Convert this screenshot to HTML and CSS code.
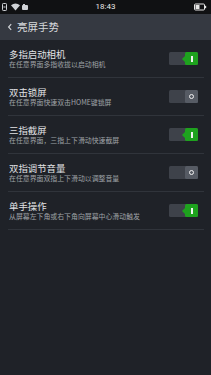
FILE: index.html
```html
<!DOCTYPE html>
<html lang="zh">
<head>
<meta charset="utf-8">
<link rel="stylesheet" href="styles.css">
</head>
<body>
<div class="screen">
  <div class="status">
    <div class="st-left">
      <svg width="30" height="10" viewBox="0 0 30 10">
        <rect x="2.5" y="1.5" width="4" height="7" rx="0.8" fill="none" stroke="#cfd2d6" stroke-width="1"/>
        <rect x="3.5" y="4.5" width="2" height="1" fill="#cfd2d6"/>
        <path d="M11 3.2 Q15.5 -0.2 20 3.2 L15.5 8.5 Z" fill="#cfd2d6"/>
        <rect x="22" y="3" width="6" height="5" rx="1" fill="#cfd2d6"/>
        <rect x="23" y="2" width="2" height="1.2" fill="#cfd2d6"/>
      </svg>
    </div>
    <div class="time">18:43</div>
    <div class="st-right">
      <svg width="14" height="10" viewBox="0 0 14 10">
        <rect x="1.5" y="2" width="10" height="6" rx="1" fill="none" stroke="#e6e6e6" stroke-width="1"/>
        <rect x="2.5" y="3" width="4" height="4" fill="#e6e6e6"/>
        <rect x="12" y="3.8" width="1.2" height="2.4" fill="#e6e6e6"/>
      </svg>
    </div>
  </div>
  <div class="titlebar">
    <svg class="back" width="6" height="8" viewBox="0 0 6 8"><path d="M4.2 1.2 L1.6 4 L4.2 6.8" fill="none" stroke="#cfd2d6" stroke-width="1.2"/></svg>
    <span class="title">亮屏手势</span>
  </div>
  <div class="list">
    <div class="row">
      <div class="text"><div class="t">多指启动相机</div><div class="s">在任意界面多指收拢以启动相机</div></div>
      <div class="sw on"><div class="thumb"></div></div>
    </div>
    <div class="row">
      <div class="text"><div class="t">双击锁屏</div><div class="s">在任意界面快速双击HOME键锁屏</div></div>
      <div class="sw off"><div class="thumb"></div></div>
    </div>
    <div class="row">
      <div class="text"><div class="t">三指截屏</div><div class="s">在任意界面，三指上下滑动快速截屏</div></div>
      <div class="sw on"><div class="thumb"></div></div>
    </div>
    <div class="row">
      <div class="text"><div class="t">双指调节音量</div><div class="s">在任意界面双指上下滑动以调整音量</div></div>
      <div class="sw off"><div class="thumb"></div></div>
    </div>
    <div class="row">
      <div class="text"><div class="t">单手操作</div><div class="s">从屏幕左下角或右下角向屏幕中心滑动触发</div></div>
      <div class="sw on"><div class="thumb"></div></div>
    </div>
  </div>
</div>
</body>
</html>
```
FILE: styles.css
```css
html, body {
  margin: 0;
  padding: 0;
  background: #1f2228;
}
.screen {
  width: 211px;
  height: 375px;
  background: #1f2228;
  font-family: "Noto Sans CJK SC", "Noto Sans", sans-serif;
  overflow: hidden;
}
.status {
  height: 14px;
  background: #101113;
  display: flex;
  align-items: center;
  justify-content: space-between;
  position: relative;
}
.st-left, .st-right {
  display: flex;
  align-items: center;
  height: 14px;
}
.st-right { padding-right: 4px; margin-left: auto; }
.time {
  position: absolute;
  left: 0;
  right: 0;
  text-align: center;
  top: 0;
  line-height: 14px;
  font-size: 8px;
  color: #e8e8e8;
  font-family: "Roboto", "Liberation Sans", sans-serif;
}
.titlebar {
  height: 26px;
  background: #353941;
  display: flex;
  align-items: center;
  padding-left: 7px;
  gap: 4px;
}
.back { display: block; }
.title {
  font-size: 10.5px;
  color: #d6d8db;
  line-height: 12px;
}
.list {
  display: flex;
  flex-direction: column;
}
.row {
  margin: 0 7px 0 8px;
  padding: 9px 6px 8px 1px;
  height: 20px;
  border-bottom: 1px solid #30343b;
  display: flex;
  align-items: center;
  justify-content: space-between;
}
.text { display: flex; flex-direction: column; }
.t {
  font-size: 9.4px;
  line-height: 10px;
  color: #e2e3e5;
  white-space: nowrap;
}
.s {
  font-size: 6.9px;
  line-height: 10px;
  color: #9fa2a7;
  white-space: nowrap;
}
.sw {
  width: 29px;
  height: 13px;
  background: #3e424a;
  border-radius: 1.5px;
  position: relative;
  margin-top: -1px;
}
.thumb {
  position: absolute;
  right: 0;
  top: 0;
  width: 13px;
  height: 13px;
  border-radius: 1.5px;
}
.on .thumb {
  background: #1ea21e;
}
.on .thumb::before {
  content: "";
  position: absolute;
  left: -3px;
  top: 3.5px;
  border-top: 3px solid transparent;
  border-bottom: 3px solid transparent;
  border-right: 3px solid #1ea21e;
}
.on .thumb::after {
  content: "";
  position: absolute;
  left: 6px;
  top: 3.5px;
  width: 1.6px;
  height: 6px;
  background: #f2f2f2;
}
.off .thumb {
  background: #565b64;
}
.off .thumb::after {
  content: "";
  position: absolute;
  left: 3.8px;
  top: 3.8px;
  width: 3.4px;
  height: 3.4px;
  border: 1.2px solid #f0f0f0;
  border-radius: 50%;
}
```
